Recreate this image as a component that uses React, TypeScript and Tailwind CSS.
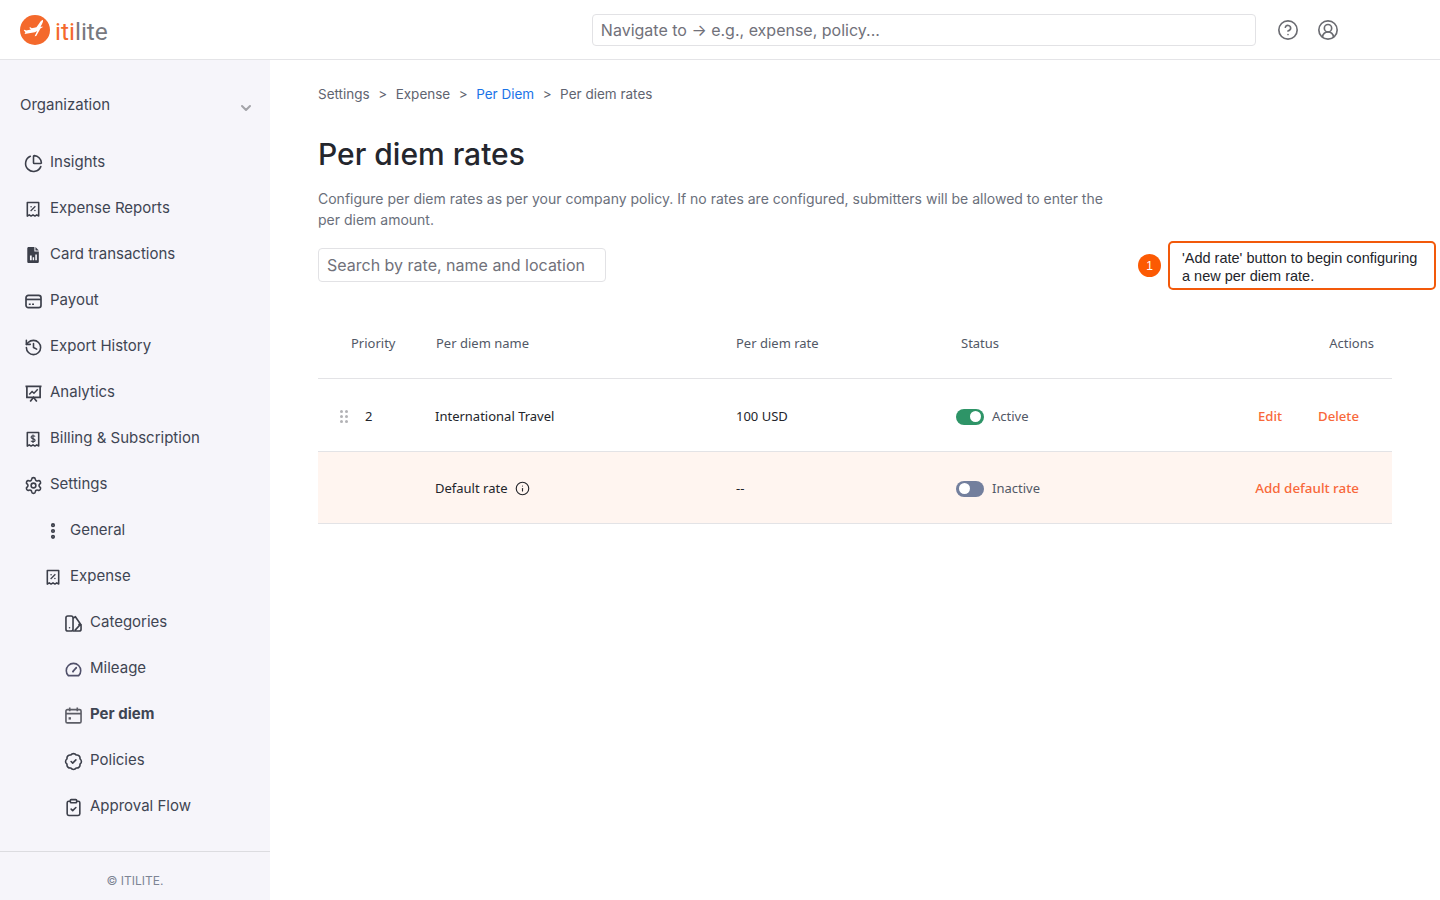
import type { ReactNode } from "react";
import {
  BadgeCheck,
  ChartPie,
  ChevronDown,
  CircleHelp,
  CircleUserRound,
  ClipboardCheck,
  EllipsisVertical,
  History,
  Info,
  Settings,
} from "lucide-react";

function ReceiptPercent() {
  return (
    <svg viewBox="0 0 16 19" className="w-[14px] h-[17px]" fill="none" stroke="currentColor" strokeWidth="1.8">
      <path d="M1.500 1.500h13v15.500l-2.200-1.400-2.100 1.400-2.200-1.400-2.200 1.400-2.100-1.400-2.200 1.400z" strokeLinejoin="round" />
      <path d="M10.700 5.800 5.300 11.200" strokeWidth="1.500" />
      <circle cx="5.800" cy="6.300" r=".9" fill="currentColor" stroke="none" />
      <circle cx="10.200" cy="10.700" r=".9" fill="currentColor" stroke="none" />
    </svg>
  );
}

function ReceiptDollar() {
  return (
    <svg viewBox="0 0 16 19" className="w-[14px] h-[17px]" fill="none" stroke="currentColor" strokeWidth="1.8">
      <path d="M1.500 1.500h13v15.500l-2.200-1.400-2.100 1.400-2.200-1.400-2.200 1.400-2.100-1.400-2.200 1.400z" strokeLinejoin="round" />
      <path d="M10.400 6.200C9.800 5 5.800 4.700 5.800 6.800S10.400 8.200 10.400 10.300 6.300 12.300 5.600 11M8 3.800v9.600" strokeWidth="1.300" />
    </svg>
  );
}

function FileChart() {
  return (
    <svg viewBox="0 0 14 18" className="w-[13px] h-4" fill="currentColor">
      <path d="M1.500 0H8V5H13V16.500C13 17.300 12.300 18 11.500 18H1.500C.7 18 0 17.300 0 16.500V1.500C0 .7.7 0 1.500 0Z" />
      <path d="M9.200 0 13 3.800H9.200Z" />
      <path d="M3 9.500h2V15H3zM6.100 11.500h1.600V15H6.100zM9 8.500h1.800V15H9z" fill="#f6f5fa" />
    </svg>
  );
}

function PresentationChart() {
  return (
    <svg viewBox="0 0 18 18" className="w-[17px] h-[17px]" fill="none" stroke="currentColor" strokeWidth="1.800">
      <path d="M.5 1.500h17M2 1.500v11.500h14V1.500" />
      <path d="m4.500 10 3-3.200 2 2 4-4.300" strokeWidth="1.500" />
      <path d="m5.500 17.500 3.500-4.500 3.500 4.500" />
    </svg>
  );
}

function CategoriesIcon() {
  return (
    <svg viewBox="0 0 18 18" className="w-[17px] h-[17px]" fill="none" stroke="currentColor" strokeWidth="1.700" strokeLinejoin="round">
      <rect x="1" y="1" width="7.500" height="16" rx="2" />
      <path d="M8.500 3.500 11 1.800l5.500 8-6 6.500M8.500 17H15c1 0 2-.8 2-2v-5h-3" />
      <circle cx="4.800" cy="13.500" r=".8" fill="currentColor" stroke="none" />
    </svg>
  );
}

function PayoutCard() {
  return (
    <svg viewBox="0 0 18 16" className="w-[17px] h-[15px]" fill="none" stroke="currentColor" strokeWidth="1.800">
      <rect x="1" y="1.500" width="16" height="13" rx="2.500" />
      <path d="M1 5.800h16" />
      <path d="M4 11h2M7.500 11h2" strokeWidth="1.500" />
    </svg>
  );
}

function MileageGauge() {
  return (
    <svg viewBox="0 0 18 16" className="w-[17px] h-[15px]" fill="none" stroke="#50506a" strokeWidth="1.700" strokeLinecap="round">
      <path d="M3.500 14.500h11c1.300-1.300 2.200-3.200 2.200-5.300A7.700 7.700 0 0 0 9 1.500a7.700 7.700 0 0 0-7.700 7.700c0 2.100.9 4 2.200 5.300z" />
      <path d="m8.500 10 3.500-4" />
      <circle cx="8.500" cy="10.200" r="1" fill="#50506a" stroke="none" />
    </svg>
  );
}

function DiemCalendar() {
  return (
    <svg viewBox="0 0 18 18" className="w-[17px] h-[17px]" fill="none" stroke="#5c5d66" strokeWidth="1.700">
      <rect x="1" y="2.800" width="16" height="14" rx="1.500" />
      <path d="M1 7h16M5 .5v4M13 .5v4" />
      <rect x="3.800" y="10.800" width="2.500" height="2.500" fill="#5c5d66" stroke="none" />
    </svg>
  );
}

function Logo() {
  return (
    <div className="flex items-center gap-[5px]">
      <svg viewBox="0 0 30 30" className="w-[30px] h-[30px]">
        <circle cx="15" cy="15" r="15" fill="#f4692c" />
        <path
          d="M24.500 5.500c-1.500.3-3 1.500-4.500 3.200l-3.300 3.800-4.700.5-1.200-1.100-1.400.3 1.600 2-4.800.5-1.600-1-.8.3 1.400 2.300-1 1.700 10.500-.8 2.300-.9-3 4.800h1.600l5-7 3-1.400-2.800-.4 1.800-2.500c1-1.500 1.700-3 1.200-4.200z"
          fill="#fff"
          transform="rotate(-6 15 15)"
        />
      </svg>
      <span className="text-[24.500px] leading-none mt-[6px] font-['Roboto',sans-serif]">
        <span className="text-[#f4692c]">iti</span>
        <span className="text-[#78797f]">lite</span>
      </span>
    </div>
  );
}

function NavItem({
  icon,
  label,
  depth = 0,
  active = false,
}: {
  icon: ReactNode;
  label: string;
  depth?: 0 | 1 | 2;
  active?: boolean;
}) {
  const pad = depth === 0 ? "pl-[23px]" : depth === 1 ? "pl-[43px]" : "pl-[63px]";
  return (
    <div className={`flex items-center h-[46px] text-[#3f4553] text-[15px] ${pad} ${active ? "font-bold" : ""}`}>
      <span className="w-5 flex justify-center mr-[7px] text-[#3c3f4a]">{icon}</span>
      <span className="relative -top-px">{label}</span>
    </div>
  );
}

function Sidebar() {
  const ic = "w-[19px] h-[19px]";
  return (
    <aside className="w-[270px] shrink-0 flex flex-col bg-[#f6f5fa]">
      <div className="flex items-center justify-between pl-5 pr-4 h-[80px] pt-[10px] text-[15px] text-[#3f4553]">
        <span>Organization</span>
        <ChevronDown className="w-4 h-4 text-[#a3a3a8] mt-[6px]" strokeWidth={3} />
      </div>
      <nav className="flex flex-col grow">
        <NavItem icon={<ChartPie className={ic} strokeWidth={2} />} label="Insights" />
        <NavItem icon={<ReceiptPercent />} label="Expense Reports" />
        <NavItem icon={<FileChart />} label="Card transactions" />
        <NavItem icon={<PayoutCard />} label="Payout" />
        <NavItem icon={<History className={ic} strokeWidth={2} />} label="Export History" />
        <NavItem icon={<PresentationChart />} label="Analytics" />
        <NavItem icon={<ReceiptDollar />} label="Billing & Subscription" />
        <NavItem icon={<Settings className={ic} strokeWidth={2} />} label="Settings" />
        <NavItem depth={1} icon={<EllipsisVertical className="w-5 h-5" strokeWidth={3} />} label="General" />
        <NavItem depth={1} icon={<ReceiptPercent />} label="Expense" />
        <NavItem depth={2} icon={<CategoriesIcon />} label="Categories" />
        <NavItem depth={2} icon={<MileageGauge />} label="Mileage" />
        <NavItem depth={2} active icon={<DiemCalendar />} label="Per diem" />
        <NavItem depth={2} icon={<BadgeCheck className={ic} strokeWidth={2} />} label="Policies" />
        <NavItem depth={2} icon={<ClipboardCheck className={ic} strokeWidth={2} />} label="Approval Flow" />
      </nav>
      <div className="h-[49px] pt-[10px] border-t border-[#dcdce0] flex items-center justify-center text-xs text-[#7d8494]">
        © ITILITE.
      </div>
    </aside>
  );
}

function Toggle({ on }: { on: boolean }) {
  return (
    <span
      className={`w-7 h-4 rounded-full flex items-center px-[3px] ${
        on ? "bg-[#2e9467] justify-end" : "bg-[#737f9d] justify-start"
      }`}
    >
      <span className="w-[11px] h-[11px] rounded-full bg-white" />
    </span>
  );
}

function RateRow({
  priority,
  name,
  rate,
  on,
  actions,
  tinted = false,
}: {
  priority?: string;
  name: ReactNode;
  rate: string;
  on: boolean;
  actions: ReactNode;
  tinted?: boolean;
}) {
  return (
    <div
      className={`flex items-center border-b border-[#e3e3e6] text-[13px] text-[#23252b] ${
        tinted ? "h-[72px] pt-[2px] bg-[#fff5f0]" : "h-[73px] pt-[3px]"
      }`}
    >
      <div className="w-[117px] flex items-center pl-[22px] gap-[17px]">
        {priority && (
          <>
            <span className="grid grid-cols-2 gap-[2px]">
              {[1, 2, 3, 4, 5, 6].map((d) => (
                <span key={d} className="w-[3px] h-[3px] rounded-full bg-[#b3b3b6]" />
              ))}
            </span>
            <span>{priority}</span>
          </>
        )}
      </div>
      <div className="w-[301px]">{name}</div>
      <div className="w-[220px]">{rate}</div>
      <div className="flex items-center gap-2 w-[200px] text-[#525866]">
        <Toggle on={on} />
        <span>{on ? "Active" : "Inactive"}</span>
      </div>
      <div className="grow flex justify-end gap-9 pr-[33px] text-[13.2px] text-[#f8683a] font-medium">{actions}</div>
    </div>
  );
}

export default function App() {
  return (
    <div className="h-[900px] flex flex-col bg-white overflow-hidden font-['Inter',sans-serif]">
      <header className="h-[60px] shrink-0 flex items-center border-b border-[#e4e4e7] pl-5">
        <Logo />
        <div className="ml-[484px] w-[664px] h-[32px] border border-[#e2e2e5] rounded flex items-center px-2 text-base text-[#71717a]">
          Navigate to → e.g., expense, policy...
        </div>
        <CircleHelp className="w-[22px] h-[22px] ml-[21px] text-[#6b6c72]" strokeWidth={1.800} />
        <CircleUserRound className="w-[22px] h-[22px] ml-[18px] text-[#6b6c72]" strokeWidth={1.800} />
      </header>

      <div className="flex grow min-h-0">
        <Sidebar />
        <main className="grow pl-12 pr-12 relative">
          <div className="flex items-center gap-[8.500px] mt-[25px] text-[13.5px] leading-[18px] text-[#5f6470]">
            <span>Settings</span>
            <span>&gt;</span>
            <span>Expense</span>
            <span>&gt;</span>
            <span className="text-[#1a73e8]">Per Diem</span>
            <span>&gt;</span>
            <span>Per diem rates</span>
          </div>

          <h1 className="mt-[31px] text-[30px] leading-[40px] font-medium text-[#24262d]">Per diem rates</h1>

          <p className="mt-[14px] w-[800px] text-sm leading-[21px] text-[#6a6f7b]">
            Configure per diem rates as per your company policy. If no rates are configured, submitters will be allowed
            to enter the per diem amount.
          </p>

          <div className="mt-[18px] w-[288px] h-[34px] border border-[#e2e2e5] rounded flex items-center px-2 text-base text-[#71717a]">
            Search by rate, name and location
          </div>

          <div className="mt-[22px] font-['Noto_Sans',sans-serif]">
            <div className="flex items-center h-[75px] pt-[6px] border-b border-[#e3e3e6] text-[13px] text-[#525866]">
              <div className="w-[118px] pl-[33px]">Priority</div>
              <div className="w-[300px]">Per diem name</div>
              <div className="w-[225px]">Per diem rate</div>
              <div className="grow">Status</div>
              <div className="pr-[18px]">Actions</div>
            </div>
            <RateRow
              priority="2"
              name="International Travel"
              rate="100 USD"
              on
              actions={
                <>
                  <span>Edit</span>
                  <span>Delete</span>
                </>
              }
            />
            <RateRow
              tinted
              name={
                <span className="flex items-center gap-2">
                  Default rate <Info className="w-[15px] h-[15px]" strokeWidth={1.800} />
                </span>
              }
              rate="--"
              on={false}
              actions={<span className="text-[13.4px]">Add default rate</span>}
            />
          </div>

          <div className="absolute left-[868px] top-[181px] flex items-center gap-[7px]">
            <span className="w-[23px] h-[23px] rounded-full bg-[#fc5a03] text-white text-xs flex items-center justify-center font-['Liberation_Sans',sans-serif]">
              1
            </span>
            <div className="w-[268px] h-[49px] pt-[2px] border-2 border-[#f2590a] rounded-[5px] bg-white pl-3 flex items-center text-[14.5px] leading-[18px] text-[#23252b] font-['Liberation_Sans',sans-serif]">
              <span>
                'Add rate' button to begin configuring
                <br />a new per diem rate.
              </span>
            </div>
          </div>
        </main>
      </div>
    </div>
  );
}
